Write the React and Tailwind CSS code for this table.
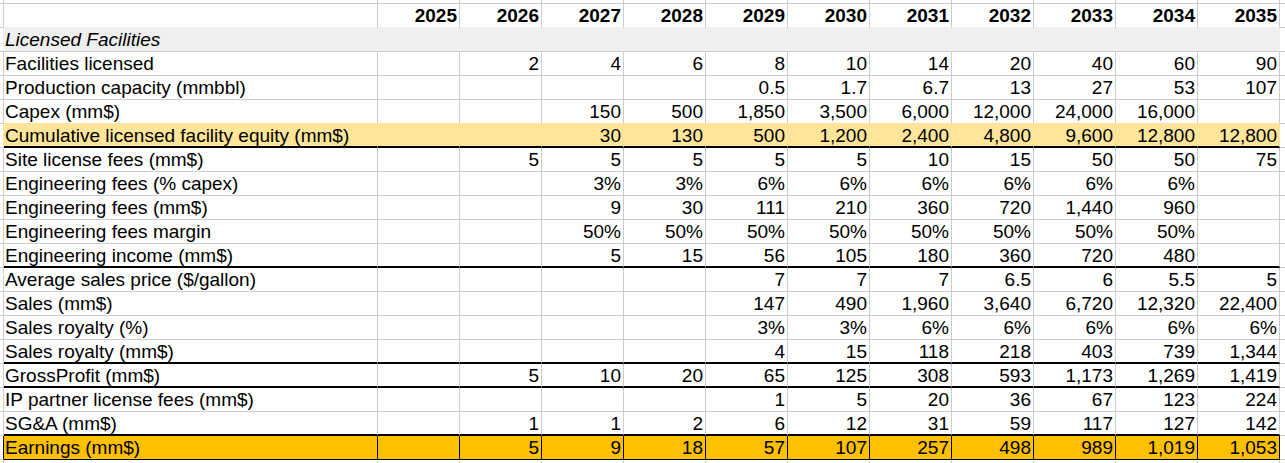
import React from "react";

const rows = [
  { label: "", vals: ["2025","2026","2027","2028","2029","2030","2031","2032","2033","2034","2035"], type: "header", bottom: "lf" },
  { label: "Licensed Facilities", vals: Array(11).fill(""), type: "lf", bottom: "gray" },
  { label: "Facilities licensed", vals: ["","2","4","6","8","10","14","20","40","60","90"], type: "normal", bottom: "gray" },
  { label: "Production capacity (mmbbl)", vals: ["","","","","0.5","1.7","6.7","13","27","53","107"], type: "normal", bottom: "gray" },
  { label: "Capex (mm$)", vals: ["","","150","500","1,850","3,500","6,000","12,000","24,000","16,000",""], type: "normal", bottom: "yellow" },
  { label: "Cumulative licensed facility equity (mm$)", vals: ["","","30","130","500","1,200","2,400","4,800","9,600","12,800","12,800"], type: "cum", bottom: "black2" },
  { label: "Site license fees (mm$)", vals: ["","5","5","5","5","5","10","15","50","50","75"], type: "normal", bottom: "gray" },
  { label: "Engineering fees (% capex)", vals: ["","","3%","3%","6%","6%","6%","6%","6%","6%",""], type: "normal", bottom: "gray" },
  { label: "Engineering fees (mm$)", vals: ["","","9","30","111","210","360","720","1,440","960",""], type: "normal", bottom: "gray" },
  { label: "Engineering fees margin", vals: ["","","50%","50%","50%","50%","50%","50%","50%","50%",""], type: "normal", bottom: "gray" },
  { label: "Engineering income (mm$)", vals: ["","","5","15","56","105","180","360","720","480",""], type: "normal", bottom: "black2" },
  { label: "Average sales price ($/gallon)", vals: ["","","","","7","7","7","6.5","6","5.5","5"], type: "normal", bottom: "gray" },
  { label: "Sales (mm$)", vals: ["","","","","147","490","1,960","3,640","6,720","12,320","22,400"], type: "normal", bottom: "gray" },
  { label: "Sales royalty (%)", vals: ["","","","","3%","3%","6%","6%","6%","6%","6%"], type: "normal", bottom: "gray" },
  { label: "Sales royalty (mm$)", vals: ["","","","","4","15","118","218","403","739","1,344"], type: "normal", bottom: "black2" },
  { label: "GrossProfit (mm$)", vals: ["","5","10","20","65","125","308","593","1,173","1,269","1,419"], type: "normal", bottom: "black2" },
  { label: "IP partner license fees (mm$)", vals: ["","","","","1","5","20","36","67","123","224"], type: "normal", bottom: "gray" },
  { label: "SG&A (mm$)", vals: ["","1","1","2","6","12","31","59","117","127","142"], type: "normal", bottom: "black2" },
  { label: "Earnings (mm$)", vals: ["","5","9","18","57","107","257","498","989","1,019","1,053"], type: "earn", bottom: "black1" },
];

const BG = {
  header: "bg-white",
  normal: "bg-white",
  lf: "bg-[#efefef]",
  cum: "bg-[#ffe599]",
  earn: "bg-[#ffc000]",
};

const RIGHT = {
  header: "border-r border-r-[#cccccc]",
  normal: "border-r border-r-[#cccccc]",
  lf: "border-r border-r-[#efefef]",
  cum: "border-r border-r-[#ffe599]",
  earn: "border-r border-r-black",
};

const BOTTOM = {
  gray: "border-b border-b-[#cccccc]",
  black2: "border-b-2 border-b-black",
  black1: "border-b border-b-black",
  yellow: "border-b border-b-[#ffe599]",
  lf: "border-b border-b-[#efefef]",
};

function SheetRow({ row }) {
  const bg = BG[row.type];
  const right = RIGHT[row.type];
  const bottom = BOTTOM[row.bottom];
  const weight = row.type === "header" ? "font-bold" : "";
  return (
    <>
      <div className={`bg-white border-b border-b-[#cccccc] ${right}`} />
      <div
        className={`${bg} ${right} ${bottom} pl-px leading-[24px] whitespace-nowrap ${
          row.type === "lf" ? "italic" : ""
        }`}
      >
        {row.label}
      </div>
      {row.vals.map((v, i) => (
        <div
          key={i}
          className={`${bg} ${right} ${bottom} ${weight} pr-[2px] text-right leading-[24px] whitespace-nowrap`}
        >
          {v}
        </div>
      ))}
      <div className="bg-white border-b border-b-[#cccccc]" />
    </>
  );
}

function BlankRow() {
  return (
    <>
      {Array.from({ length: 13 }).map((_, i) => (
        <div key={i} className="border-r border-b border-[#cccccc]" />
      ))}
      <div className="border-b border-[#cccccc]" />
    </>
  );
}

export default function App() {
  return (
    <div className="w-[1285px] h-[463px] overflow-hidden bg-white text-black font-['Liberation_Sans',Arial,sans-serif] text-[19px]">
      <div className="grid grid-cols-[4px_374px_repeat(11,82px)_1fr] grid-rows-[4px_repeat(20,24px)]">
        <BlankRow />
        {rows.map((r, i) => (
          <SheetRow key={i} row={r} />
        ))}
        <BlankRow />
      </div>
    </div>
  );
}
